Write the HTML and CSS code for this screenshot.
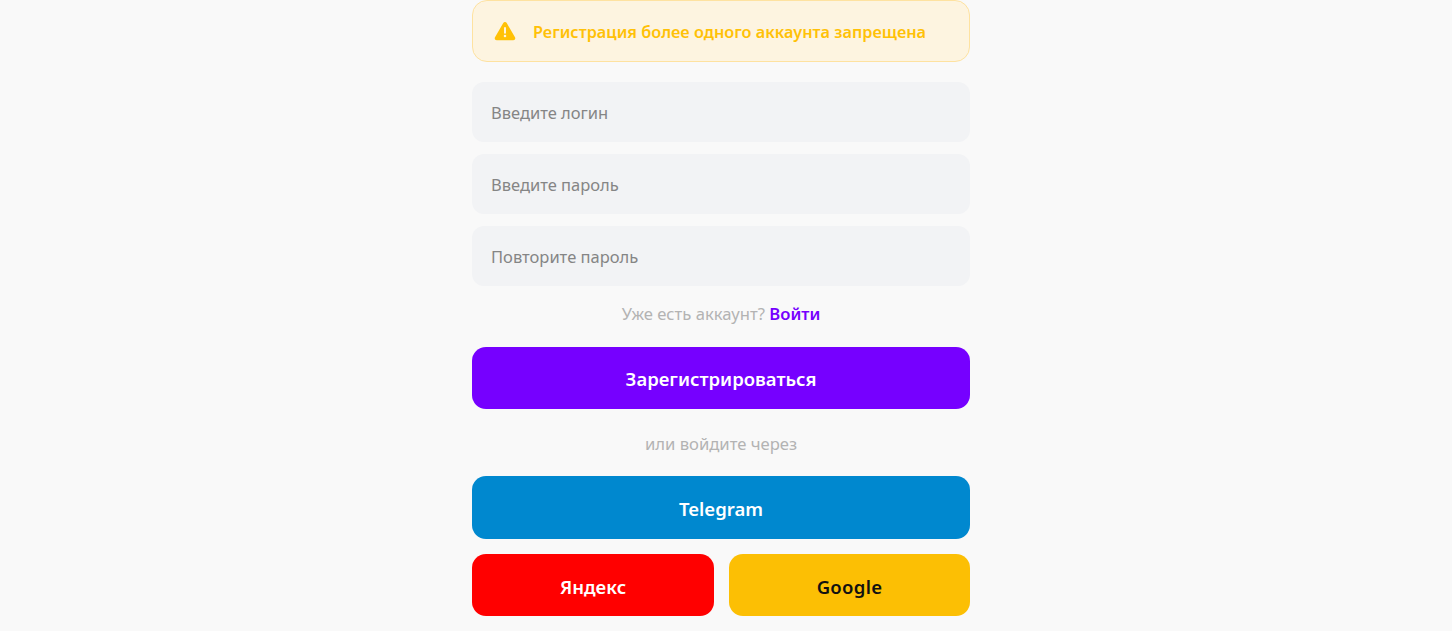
FILE: index.html
```html
<!DOCTYPE html>
<html lang="ru">
<head>
<meta charset="utf-8">
<title>Регистрация</title>
<link rel="stylesheet" href="styles.css">
</head>
<body>
<main class="form">
  <div class="alert">
    <svg class="alert-icon" viewBox="0 0 24 24" width="22" height="22" aria-hidden="true"><path fill="#ffc107" fill-rule="evenodd" d="M12 2.2c.8 0 1.5.4 1.9 1.1l9 15.6c.9 1.5-.2 3.3-1.9 3.3H3c-1.7 0-2.8-1.8-1.9-3.3l9-15.6c.4-.7 1.1-1.1 1.9-1.1zM10.9 8v6.6h2.2V8zM12 16a1.4 1.4 0 1 0 0 2.8 1.4 1.4 0 0 0 0-2.8z"/></svg>
    <span>Регистрация более одного аккаунта запрещена</span>
  </div>
  <div class="fields">
    <input class="field" type="text" placeholder="Введите логин">
    <input class="field" type="password" placeholder="Введите пароль">
    <input class="field" type="password" placeholder="Повторите пароль">
  </div>
  <p class="hint first">Уже есть аккаунт? <a class="link" href="#">Войти</a></p>
  <button class="btn primary" type="button">Зарегистрироваться</button>
  <p class="hint second">или войдите через</p>
  <button class="btn telegram" type="button">Telegram</button>
  <div class="socials">
    <button class="btn yandex" type="button">Яндекс</button>
    <button class="btn google" type="button">Google</button>
  </div>
</main>
</body>
</html>
```

FILE: styles.css
```css
* { box-sizing: border-box; }
html, body { margin: 0; height: 631px; overflow: hidden; }
body {
  background: #f9f9f9;
  font-family: "Noto Sans", "Open Sans", sans-serif;
  font-size: 16px;
}
.form {
  width: 498px;
  margin-left: 472px;
  display: flex;
  flex-direction: column;
}
.alert {
  height: 62px;
  display: flex;
  align-items: center;
  gap: 17px;
  padding: 2px 0 0 21px;
  background: #fdf4e0;
  border: 1px solid #fee2a0;
  border-radius: 15px;
  color: #ffc107;
  font-weight: 600;
  font-size: 16.3px;
}
.alert-icon { flex: none; margin-top: -2px; }
.fields {
  margin-top: 20px;
  display: flex;
  flex-direction: column;
  gap: 12px;
}
.field {
  height: 60px;
  width: 100%;
  border: 0;
  outline: 0;
  border-radius: 12px;
  background: #f2f3f5;
  padding: 0 19px;
  font: inherit;
  font-size: 16.5px;
  color: #333;
}
.field::placeholder { color: #858585; opacity: 1; }
.hint {
  margin: 0;
  text-align: center;
  color: #b3b3b3;
  line-height: 22px;
  font-size: 16.65px;
}
.hint.first { margin-top: 17px; margin-bottom: 22px; }
.hint.second { margin-top: 24px; margin-bottom: 21px; }
.link { color: #7600ff; font-weight: 600; text-decoration: none; }
.btn {
  display: block;
  width: 100%;
  height: 62px;
  border: 0;
  border-radius: 14px;
  font: inherit;
  font-weight: 600;
  font-size: 18.5px;
  color: #fff;
  padding: 2px 0 0;
}
.primary { background: #7600ff; padding-top: 1px; }
.telegram { background: #0088cf; height: 63px; }
.socials {
  margin-top: 15px;
  display: grid;
  grid-template-columns: 242px 241px;
  gap: 15px;
}
.yandex { background: #ff0000; }
.google { background: #fcbf04; color: #111; letter-spacing: .3px; }
```
